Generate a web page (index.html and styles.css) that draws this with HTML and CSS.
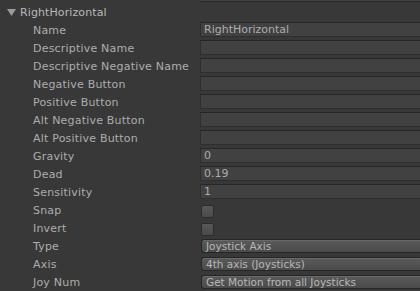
FILE: index.html
```html
<!DOCTYPE html>
<html>
<head>
<meta charset="utf-8">
<link rel="stylesheet" href="styles.css">
</head>
<body>
<div class="inspector">
  <div class="stub"><div class="stub-field"></div></div>
  <div class="header">
    <svg class="foldout" width="9" height="7" viewBox="0 0 9 7"><polygon points="0,0 9,0 4.5,7" fill="#9a9a9a"/></svg>
    <span class="title">RightHorizontal</span>
  </div>
  <div class="row"><span class="label">Name</span><div class="field">RightHorizontal</div></div>
  <div class="row"><span class="label">Descriptive Name</span><div class="field"></div></div>
  <div class="row"><span class="label">Descriptive Negative Name</span><div class="field"></div></div>
  <div class="row"><span class="label">Negative Button</span><div class="field"></div></div>
  <div class="row"><span class="label">Positive Button</span><div class="field"></div></div>
  <div class="row"><span class="label">Alt Negative Button</span><div class="field"></div></div>
  <div class="row"><span class="label">Alt Positive Button</span><div class="field"></div></div>
  <div class="row"><span class="label">Gravity</span><div class="field">0</div></div>
  <div class="row"><span class="label">Dead</span><div class="field">0.19</div></div>
  <div class="row"><span class="label">Sensitivity</span><div class="field">1</div></div>
  <div class="row"><span class="label">Snap</span><div class="check"></div></div>
  <div class="row"><span class="label">Invert</span><div class="check"></div></div>
  <div class="row"><span class="label">Type</span><div class="popup">Joystick Axis</div></div>
  <div class="row"><span class="label">Axis</span><div class="popup">4th axis (Joysticks)</div></div>
  <div class="row"><span class="label">Joy Num</span><div class="popup">Get Motion from all Joysticks</div></div>
</div>
</body>
</html>
```
FILE: styles.css
```css
html, body {
  margin: 0;
  padding: 0;
  background: #383838;
  overflow: hidden;
}
.inspector {
  width: 420px;
  height: 291px;
  font-family: "DejaVu Sans", sans-serif;
  font-size: 11px;
  color: #adadad;
}
.stub {
  height: 3px;
  display: flex;
}
.stub-field {
  margin-left: 200px;
  flex: 1;
  height: 1px;
  background: #414141;
  border-bottom: 1px solid #2a2a2a;
}
.header {
  height: 18px;
  display: flex;
  align-items: center;
  padding-left: 7px;
}
.foldout {
  margin-right: 4px;
}
.title {
  color: #b8b8b8;
  letter-spacing: 0.1px;
  padding-top: 1px;
}
.row {
  height: 18px;
  display: flex;
  align-items: flex-start;
}
.label {
  width: 167px;
  padding-left: 33px;
  padding-top: 1px;
  line-height: 18px;
  height: 17px;
  letter-spacing: 0.2px;
  white-space: nowrap;
  flex: none;
}
.field {
  margin-top: 1px;
  flex: 1;
  height: 13px;
  line-height: 14px;
  background: #414141;
  border: 1px solid #2e2e2e;
  border-top-color: #262626;
  border-right: none;
  padding-left: 3px;
  color: #adadad;
  white-space: nowrap;
}
.check {
  margin-top: 4px;
  margin-left: 1px;
  width: 11px;
  height: 11px;
  border-radius: 2px;
  background: linear-gradient(#585858, #4a4a4a);
  border: 1px solid #2c2c2c;
}
.popup {
  margin-top: 2px;
  margin-left: 1px;
  flex: 1;
  height: 12px;
  line-height: 13px;
  font-size: 10.5px;
  border: 1px solid #262626;
  border-right: none;
  border-radius: 3px 0 0 3px;
  background: linear-gradient(#5a5a5a, #4b4b4b);
  box-shadow: inset 0 1px 0 #6a6a6a;
  padding-left: 4px;
  color: #b8b8b8;
  white-space: nowrap;
}
```
